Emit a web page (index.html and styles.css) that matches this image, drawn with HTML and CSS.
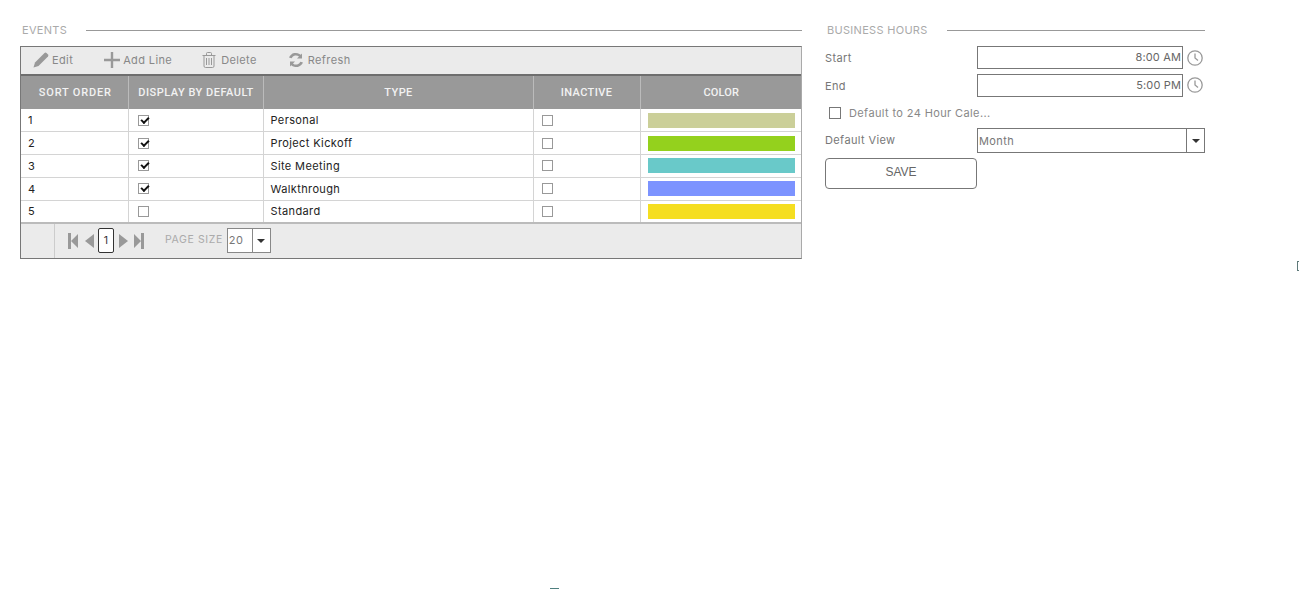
FILE: index.html
```html
<!DOCTYPE html>
<html lang="en">
<head>
<meta charset="utf-8">
<title>Calendar Settings</title>
<link rel="stylesheet" href="styles.css">
</head>
<body>
<main class="page">
  <section class="events">
    <h2 class="section-title"><span>EVENTS</span></h2>
    <div class="grid">
      <div class="toolbar">
        <button class="tool tool-edit"><svg width="16" height="16" viewBox="0 0 16 16"><path d="M0.5 15.5 L2 10.5 L11.5 1 Q12.5 0.2 13.5 1 L15 2.5 Q15.8 3.5 15 4.5 L5.5 14 Z" fill="#999"/></svg>Edit</button>
        <button class="tool tool-add"><svg width="16" height="16" viewBox="0 0 16 16"><path d="M6.8 0h2.4v6.8H16v2.4H9.200V16H6.800V9.200H0V6.800h6.800z" fill="#999"/></svg>Add Line</button>
        <button class="tool tool-delete"><svg width="14" height="16" viewBox="0 0 14 16" fill="none" stroke="#999"><path d="M0.500 3.500h13M2 3.500V14a1.500 1.500 0 0 0 1.500 1.500h7A1.500 1.500 0 0 0 12 14V3.500M4.500 3.500V1.500a1 1 0 0 1 1-1h3a1 1 0 0 1 1 1v2M4.500 6v7M7 6v7M9.500 6v7"/></svg>Delete</button>
        <button class="tool tool-refresh"><svg width="16" height="16" viewBox="0 0 16 16" fill="#999"><path d="M14 1.500V6.500H9L11 4.600A4.700 4.700 0 0 0 3.600 6.200L1 5.500A7.400 7.400 0 0 1 12.800 2.800Z"/><path d="M2 14.500V9.500H7L5 11.400A4.700 4.700 0 0 0 12.400 9.800L15 10.500A7.400 7.400 0 0 1 3.200 13.200Z"/></svg>Refresh</button>
      </div>
      <table class="table">
        <colgroup><col class="c1"><col class="c2"><col class="c3"><col class="c4"><col class="c5"></colgroup>
        <thead>
          <tr><th class="th-sort">SORT ORDER</th><th class="th-display">DISPLAY BY DEFAULT</th><th class="th-type">TYPE</th><th>INACTIVE</th><th class="th-color">COLOR</th></tr>
        </thead>
        <tbody>
          <tr><td>1</td><td class="cb-cell cb-first"><span class="cb on"></span></td><td>Personal</td><td class="cb-cell"><span class="cb"></span></td><td class="color-cell"><div class="swatch s1"></div></td></tr>
          <tr><td>2</td><td class="cb-cell cb-first"><span class="cb on"></span></td><td>Project Kickoff</td><td class="cb-cell"><span class="cb"></span></td><td class="color-cell"><div class="swatch s2"></div></td></tr>
          <tr><td>3</td><td class="cb-cell cb-first"><span class="cb on"></span></td><td>Site Meeting</td><td class="cb-cell"><span class="cb"></span></td><td class="color-cell"><div class="swatch s3"></div></td></tr>
          <tr><td>4</td><td class="cb-cell cb-first"><span class="cb on"></span></td><td>Walkthrough</td><td class="cb-cell"><span class="cb"></span></td><td class="color-cell"><div class="swatch s4"></div></td></tr>
          <tr><td>5</td><td class="cb-cell cb-first"><span class="cb"></span></td><td>Standard</td><td class="cb-cell"><span class="cb"></span></td><td class="color-cell"><div class="swatch s5"></div></td></tr>
        </tbody>
      </table>
      <div class="pager">
        <div class="pager-stub"></div>
        <div class="pager-nav">
          <svg width="10" height="16" viewBox="0 0 10 16" fill="#999"><path d="M0 0h3v16H0zM10 1v14L3 8z"/></svg>
          <svg class="nav-prev" width="9" height="16" viewBox="0 0 9 16" fill="#999"><path d="M9 1v14L0 8z"/></svg>
          <span class="page-num">1</span>
          <svg class="nav-next" width="9" height="16" viewBox="0 0 9 16" fill="#999"><path d="M0 1v14l9-7z"/></svg>
          <svg class="nav-last" width="10" height="16" viewBox="0 0 10 16" fill="#999"><path d="M7 0h3v16H7zM0 1v14l7-7z"/></svg>
          <span class="page-size">PAGE SIZE</span>
          <span class="size-select"><span class="size-val">20</span><span class="size-arrow"><i class="caret"></i></span></span>
        </div>
      </div>
    </div>
  </section>
  <section class="hours">
    <h2 class="section-title"><span>BUSINESS HOURS</span></h2>
    <div class="form-row row-start">
      <label class="lbl">Start</label>
      <div class="time-input">8:00 AM</div>
      <svg class="clock" width="16" height="16" viewBox="0 0 16 16" fill="none" stroke="#999" stroke-width="1.300"><circle cx="8" cy="8" r="7.200"/><path d="M8 3.500V8l3 2.500"/></svg>
    </div>
    <div class="form-row row-end">
      <label class="lbl">End</label>
      <div class="time-input">5:00 PM</div>
      <svg class="clock clock-end" width="16" height="16" viewBox="0 0 16 16" fill="none" stroke="#999" stroke-width="1.300"><circle cx="8" cy="8" r="7.200"/><path d="M8 3.500V8l3 2.500"/></svg>
    </div>
    <div class="check-row"><span class="cb cb-large"></span><span>Default to 24 Hour Cale...</span></div>
    <div class="form-row row-view">
      <label class="lbl lbl-view">Default View</label>
      <div class="view-select"><span class="view-val">Month</span><span class="view-arrow"><i class="caret"></i></span></div>
    </div>
    <button class="save">SAVE</button>
  </section>
</main>
<div class="mark-right"></div>
<div class="mark-bottom"></div>
</body>
</html>
```
FILE: styles.css
```css
* { box-sizing: border-box; }
html, body { margin: 0; padding: 0; height: 589px; overflow: hidden; background: #fff; }
body { font-family: Inter, "Open Sans", sans-serif; font-size: 11px; letter-spacing: 0.38px; color: #222; position: relative; }
.page { display: flex; align-items: flex-start; padding: 24px 0 0 20px; }
.events { width: 782px; }
.hours { width: 380px; margin-left: 23px; }
.section-title { display: flex; align-items: center; height: 13px; margin: 0 0 9px; font-size: 11px; font-weight: 400; color: #aaa; letter-spacing: 0.3px; padding-left: 2px; }
.section-title span { margin-right: 19px; padding-bottom: 2px; }
.section-title::after { content: ""; flex: 1; height: 1px; background: #999; }
.grid { border: 1px solid #777; border-right-color: #aaa; height: 213px; background: #ebebeb; display: flex; flex-direction: column; }
.toolbar { height: 29px; flex: none; padding-bottom: 1px; background: #ebebeb; border-bottom: 2px solid #6e6e6e; display: flex; align-items: center; }
.tool { border: 0; background: none; padding: 0; display: flex; align-items: center; font: 11px Inter, sans-serif; letter-spacing: 0.38px; color: #888; }
.tool-edit { margin-left: 12px; gap: 3px; }
.tool-add { margin-left: 31px; gap: 3px; }
.tool-delete { margin-left: 30px; gap: 5px; }
.tool-refresh { margin-left: 31px; gap: 4px; }
.table { width: 780px; border-collapse: collapse; table-layout: fixed; background: #fff; flex: none; }
.c1 { width: 107px; } .c2 { width: 135px; } .c3 { width: 270px; } .c4 { width: 107px; } .c5 { width: 161px; }
th { height: 33px; background: #999; color: #f2f2f2; font: 500 11px Roboto, sans-serif; letter-spacing: 0.4px; text-align: center; border-left: 1px solid #bbb; padding: 0; }
th:first-child { border-left: 0; }
.th-sort { letter-spacing: 0.8px; padding-left: 2px; }
.th-display { letter-spacing: 0.5px; padding-left: 1px; }
.th-type { padding-left: 1px; }
.th-color { padding: 0 0 1px 1px; letter-spacing: 0.1px; }
td { height: 22.75px; border: 1px solid #d4d4d4; border-top: 0; padding: 0 0 0 7px; font-size: 11px; color: #222; vertical-align: middle; }
td:first-child { border-left: 0; }
td:last-child { border-right: 0; }
tbody tr:last-child td { border-bottom: 2px solid #bbb; }
.cb-cell { padding-left: 8px; }
.cb-first { padding-left: 9px; }
.cb { display: block; width: 11px; height: 11px; border: 1px solid #999; background: #fff; position: relative; }
.cb.on::after { content: ""; position: absolute; left: 2px; top: 1px; width: 6px; height: 3px; border-left: 2px solid #111; border-bottom: 2px solid #111; transform: rotate(-45deg); }
.color-cell { padding: 0 6px 0 7px; }
.swatch { height: 15px; }
.s1 { background: #cbcf99; } .s2 { background: #94d11d; } .s3 { background: #69c9c9; } .s4 { background: #7c93ff; } .s5 { background: #f5de20; }
.pager { flex: 1; display: flex; background: #ebebeb; }
.pager-stub { width: 34px; border-right: 1px solid #ccc; }
.pager-nav { display: flex; align-items: center; padding-left: 13px; }
.nav-prev { margin-left: 7px; }
.page-num { width: 16px; height: 25px; margin-left: 4px; border: 1px solid #333; border-radius: 2px; background: #fff; display: flex; align-items: center; justify-content: center; font-size: 10.500px; color: #333; }
.nav-next { margin-left: 5px; }
.nav-last { margin-left: 6px; }
.page-size { margin-left: 21px; font-size: 10.500px; color: #aaa; letter-spacing: 0.6px; margin-bottom: 2px; }
.size-select { margin-left: 4px; width: 44px; height: 25px; border: 1px solid #888; background: #fff; display: flex; }
.size-val { flex: 1; padding: 3px 0 0 1px; font-size: 11px; color: #777; line-height: 17px; }
.size-arrow { width: 18px; border-left: 1px solid #888; display: flex; align-items: center; justify-content: center; }
.caret { width: 0; height: 0; border: 4px solid transparent; border-top: 4px solid #333; border-bottom: 0; }
.form-row { display: flex; align-items: center; }
.lbl { width: 152px; color: #777; font-size: 11px; }
.lbl-view { padding-bottom: 2px; }
.row-start { height: 23px; }
.row-end { height: 23px; margin-top: 5px; }
.time-input { width: 206px; height: 23px; border: 1px solid #777; text-align: right; line-height: 20px; padding-right: 1px; color: #666; font-size: 11px; letter-spacing: 0.15px; background: #fff; }
.clock { margin-left: 4px; }
.clock-end { margin-bottom: 2px; }
.check-row { display: flex; align-items: center; gap: 8px; height: 14px; margin: 9px 0 0 4px; font-size: 11px; color: #888; }
.cb-large { width: 12px; height: 12px; border-color: #777; }
.row-view { height: 25px; margin-top: 8px; }
.view-select { width: 228px; height: 25px; border: 1px solid #777; display: flex; background: #fff; }
.view-val { flex: 1; padding: 2px 0 0 1px; color: #777; font-size: 11px; line-height: 20px; }
.view-arrow { width: 18px; border-left: 1px solid #777; display: flex; align-items: center; justify-content: center; }
.save { display: block; width: 152px; height: 31px; margin-top: 5px; padding: 0 0 4px; border: 1px solid #777; border-radius: 4px; background: #fff; color: #666; font: 12px "Liberation Sans", sans-serif; }
.mark-right { position: absolute; left: 1297px; top: 261px; width: 2px; height: 10px; border: 1px solid #5f7a7a; border-right: 0; }
.mark-bottom { position: absolute; left: 550px; top: 588px; width: 9px; height: 1px; background: #4f7f7f; }
```
